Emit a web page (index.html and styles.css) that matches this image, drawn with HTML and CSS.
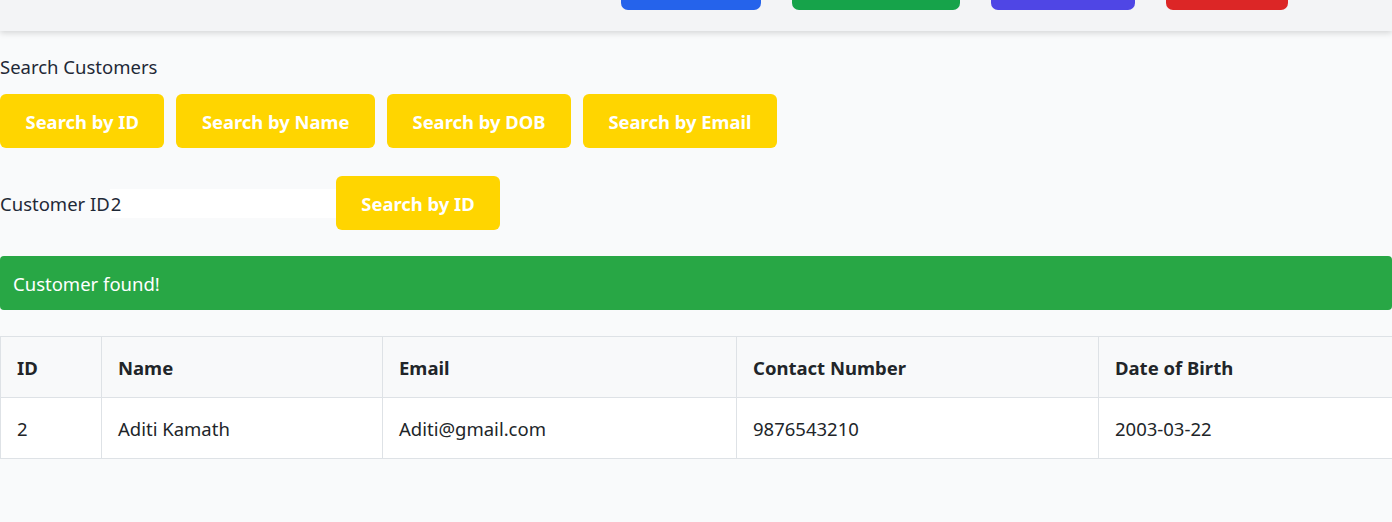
FILE: index.html
```html
<!DOCTYPE html>
<html>
<head>
<meta charset="utf-8">
<link rel="stylesheet" href="styles.css">
</head>
<body>
<header class="topbar">
  <nav class="nav-actions">
    <button class="nav-btn blue">Customers</button>
    <button class="nav-btn green">Add Customer</button>
    <button class="nav-btn indigo">Accounts</button>
    <button class="nav-btn red">Logout</button>
  </nav>
</header>
<main class="content">
  <h2 class="title">Search Customers</h2>
  <div class="btn-row">
    <button class="ybtn">Search by ID</button>
    <button class="ybtn">Search by Name</button>
    <button class="ybtn">Search by DOB</button>
    <button class="ybtn">Search by Email</button>
  </div>
  <form class="search-form">
    <label class="field-label" for="cid">Customer ID</label><input id="cid" class="field-input" type="text" value="2"><button type="button" class="ybtn">Search by ID</button>
  </form>
  <div class="alert">Customer found!</div>
  <table class="results">
    <colgroup>
      <col class="c1"><col class="c2"><col class="c3"><col class="c4"><col class="c5">
    </colgroup>
    <thead>
      <tr><th>ID</th><th>Name</th><th>Email</th><th>Contact Number</th><th>Date of Birth</th></tr>
    </thead>
    <tbody>
      <tr><td>2</td><td>Aditi Kamath</td><td>Aditi@gmail.com</td><td>9876543210</td><td>2003-03-22</td></tr>
    </tbody>
  </table>
</main>
</body>
</html>
```

FILE: styles.css
```css
* { box-sizing: border-box; }
html, body { margin: 0; padding: 0; }
body {
  background: #f9fafb;
  font-family: "Noto Sans", "Open Sans", sans-serif;
  color: #1f2937;
  width: 1392px;
  overflow: hidden;
}
.topbar {
  height: 31px;
  background: #f3f4f6;
  box-shadow: 0 2px 6px rgba(0,0,0,0.15);
  position: relative;
  z-index: 2;
}
.nav-actions {
  display: flex;
  align-items: flex-start;
  padding-left: 621px;
  gap: 31px;
}
.nav-btn {
  height: 44px;
  margin-top: -34px;
  border: none;
  border-radius: 0 0 7px 7px;
  color: #fff;
  font-family: inherit;
  font-size: 16px;
  font-weight: 600;
  line-height: 24px;
  padding: 0 0 20px;
}
.blue { background: #2563eb; width: 140px; }
.green { background: #16a34a; width: 168px; }
.indigo { background: #4f46e5; width: 144px; }
.red { background: #dc2626; width: 122px; }
.content { padding-top: 22px; }
.title {
  margin: 0;
  font-size: 18.5px;
  font-weight: 400;
  line-height: 27px;
  color: #1f2937;
}
.btn-row {
  display: flex;
  gap: 12px;
  margin-top: 14px;
}
.ybtn {
  height: 54px;
  padding: 0 25.5px;
  background: #ffd500;
  color: #fff;
  border: none;
  border-radius: 6px;
  font-family: inherit;
  font-size: 18.4px;
  font-weight: 700;
}
.search-form {
  display: flex;
  align-items: center;
  margin-top: 28px;
}
.field-label {
  font-size: 18.5px;
  color: #1f2937;
}
.field-input {
  width: 226px;
  height: 29px;
  border: none;
  background: #fff;
  padding: 0 0 0 1px;
  font-family: inherit;
  font-size: 18.5px;
  color: #1f2937;
  outline: none;
}
.alert {
  margin-top: 26px;
  height: 54px;
  background: #28a745;
  color: #fff;
  border-radius: 4px;
  padding: 0 13px;
  display: flex;
  align-items: center;
  font-size: 18.5px;
}
.results {
  margin-top: 26px;
  border-collapse: collapse;
  table-layout: fixed;
  width: 1400px;
  font-size: 18.5px;
  color: #212529;
}
.c1 { width: 101px; }
.c2 { width: 281px; }
.c3 { width: 354px; }
.c4 { width: 362px; }
.c5 { width: 302px; }
.results th, .results td {
  border: 1px solid #dee2e6;
  height: 61px;
  padding: 0 16px;
  text-align: left;
}
.results th { background: #f8f9fa; font-weight: 700; }
.results td { background: #fff; }
```
